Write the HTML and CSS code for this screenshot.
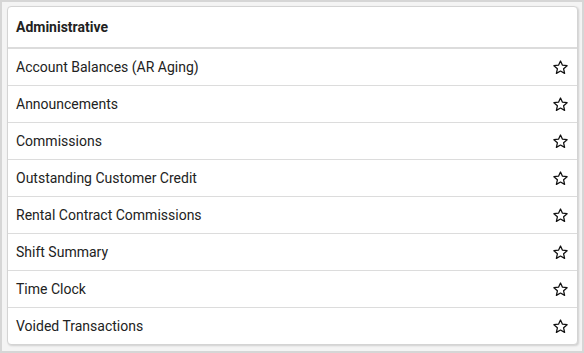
FILE: index.html
```html
<!DOCTYPE html>
<html lang="en">
<head>
  <meta charset="UTF-8">
  <title>Reports - Administrative</title>
  <link rel="stylesheet" href="styles.css">
</head>
<body>

  <section class="card">
    <header class="card-header">Administrative</header>
    <ul class="report-list">
      <li>Account Balances (AR Aging) <span class="star"><svg viewBox="0 0 24 24"><path d="M12 2.8l2.8 6 6.5.7-4.9 4.4 1.4 6.4L12 17l-5.8 3.3 1.4-6.4-4.9-4.4 6.5-.7z"/></svg></span></li>
      <li>Announcements <span class="star"><svg viewBox="0 0 24 24"><path d="M12 2.8l2.8 6 6.5.7-4.9 4.4 1.4 6.4L12 17l-5.8 3.3 1.4-6.4-4.9-4.4 6.5-.7z"/></svg></span></li>
      <li>Commissions <span class="star"><svg viewBox="0 0 24 24"><path d="M12 2.8l2.8 6 6.5.7-4.9 4.4 1.4 6.4L12 17l-5.8 3.3 1.4-6.4-4.9-4.4 6.5-.7z"/></svg></span></li>
      <li>Outstanding Customer Credit <span class="star"><svg viewBox="0 0 24 24"><path d="M12 2.8l2.8 6 6.5.7-4.9 4.4 1.4 6.4L12 17l-5.8 3.3 1.4-6.4-4.9-4.4 6.5-.7z"/></svg></span></li>
      <li>Rental Contract Commissions <span class="star"><svg viewBox="0 0 24 24"><path d="M12 2.8l2.8 6 6.5.7-4.9 4.4 1.4 6.4L12 17l-5.8 3.3 1.4-6.4-4.9-4.4 6.5-.7z"/></svg></span></li>
      <li>Shift Summary <span class="star"><svg viewBox="0 0 24 24"><path d="M12 2.8l2.8 6 6.5.7-4.9 4.4 1.4 6.4L12 17l-5.8 3.3 1.4-6.4-4.9-4.4 6.5-.7z"/></svg></span></li>
      <li>Time Clock <span class="star"><svg viewBox="0 0 24 24"><path d="M12 2.8l2.8 6 6.5.7-4.9 4.4 1.4 6.4L12 17l-5.8 3.3 1.4-6.4-4.9-4.4 6.5-.7z"/></svg></span></li>
      <li>Voided Transactions <span class="star"><svg viewBox="0 0 24 24"><path d="M12 2.8l2.8 6 6.5.7-4.9 4.4 1.4 6.4L12 17l-5.8 3.3 1.4-6.4-4.9-4.4 6.5-.7z"/></svg></span></li>
    </ul>
  </section>

</body>
</html>
```

FILE: styles.css
```css
* { box-sizing: border-box; margin: 0; padding: 0; }

body {
  font-family: Roboto, "Liberation Sans", sans-serif;
  background-color: #f4f4f4;
  border: 2px solid #d6d6d6;
  padding: 4px 4px 6px 5px;
  height: 353px;
  overflow: hidden;
}

.card {
  background: white;
  border: 1px solid #d4d4d4;
  border-radius: 4px;
  box-shadow: 1px 1px 2px rgba(0, 0, 0, 0.15);
  color: #222;
}

.card-header {
  font-size: 14px;
  font-weight: bold;
  height: 42px;
  padding: 0 8px;
  display: flex;
  align-items: center;
  border-bottom: 2px solid #dcdcdc;
}

.report-list {
  list-style: none;
}

.report-list li {
  display: flex;
  align-items: center;
  justify-content: space-between;
  height: 37px;
  padding: 0 8px 0 8px;
  font-size: 14px;
  border-bottom: 1px solid #dcdcdc;
}

.report-list li:last-child {
  border-bottom: none;
  height: 36px;
}

.star svg {
  display: block;
  width: 17px;
  height: 17px;
  fill: none;
  stroke: #111;
  stroke-width: 1.8;
  stroke-linejoin: round;
}
```
